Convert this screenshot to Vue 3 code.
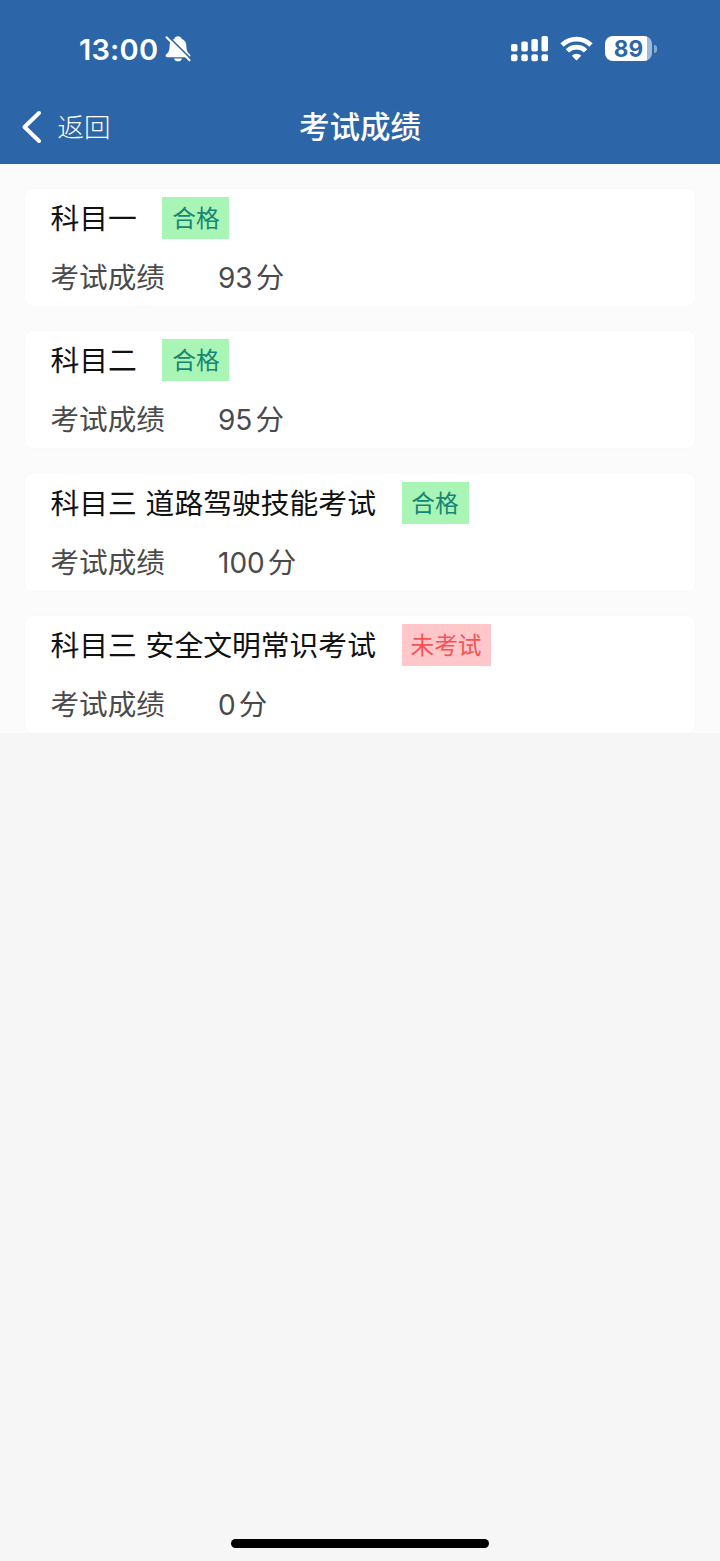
<template>
  <div class="page">
    <header class="header">
      <div class="status-bar">
        <div class="status-left">
          <span class="time">13:00</span>
          <svg class="bell" width="26" height="28" viewBox="0 0 26 28">
            <path d="M13 1.200c-1.900 0-3.200 1-3.600 2.500C6.200 4.900 4.700 7.500 4.600 11c-.1 5-1.100 6.300-3.500 8.600-1 1-.6 2.600.9 2.600h22c1.500 0 1.900-1.600.9-2.600-2.400-2.300-3.400-3.600-3.500-8.600-.1-3.500-1.600-6.100-4.800-7.300C16.200 2.200 14.900 1.200 13 1.200z" fill="#fff" />
            <path d="M9 23.400h8c-.4 1.900-1.900 2.900-4 2.900s-3.600-1-4-2.900z" fill="#fff" />
            <path d="M3.200 1.200L26 24" stroke="#2c66a9" stroke-width="1.600" />
            <path d="M1.500 2.300L24.500 25.300" stroke="#fff" stroke-width="2" stroke-linecap="round" />
          </svg>
        </div>
        <div class="status-right">
          <svg class="signal" width="38" height="26" viewBox="0 0 38 26" fill="#fff">
            <rect x="0" y="8" width="6.500" height="7.500" rx="1.800" />
            <rect x="10.300" y="5.500" width="6.500" height="10" rx="1.800" />
            <rect x="20.400" y="3" width="6.500" height="12.500" rx="1.800" />
            <rect x="30.500" y="0" width="6.500" height="15.500" rx="1.800" />
            <rect x="0" y="18.300" width="6.500" height="7" rx="2" />
            <rect x="10.300" y="18.300" width="6.500" height="7" rx="2" />
            <rect x="20.400" y="18.300" width="6.500" height="7" rx="2" />
            <rect x="30.500" y="18.300" width="6.500" height="7" rx="2" />
          </svg>
          <svg class="wifi" width="33" height="25" viewBox="0 0 33 25" fill="none" stroke="#fff" stroke-width="4.700">
            <path d="M2 9a20.800 20.800 0 0 1 29 0" />
            <path d="M7.400 14.900a13 13 0 0 1 18.200 0" />
            <path d="M16.500 24.400l-4.700-4.600a6.700 6.700 0 0 1 9.400 0z" fill="#fff" stroke="none" />
          </svg>
          <div class="battery">
            <div class="battery-body">89</div>
            <div class="battery-cap"></div>
          </div>
        </div>
      </div>
      <div class="nav-bar">
        <div class="back">
          <svg width="22" height="34" viewBox="0 0 22 34" fill="none" stroke="#fff" stroke-width="4" stroke-linecap="round" stroke-linejoin="round">
            <path d="M19 3L4.500 17L19 31" />
          </svg>
          <span class="back-text">返回</span>
        </div>
        <h1 class="title">考试成绩</h1>
        <div class="nav-side"></div>
      </div>
    </header>

    <main class="list">
      <div v-for="item in examList" :key="item.name" class="card">
        <div class="card-row">
          <span class="name">{{ item.name }}</span>
          <span class="tag" :class="item.passed ? 'tag-pass' : 'tag-none'">{{ item.passed ? '合格' : '未考试' }}</span>
        </div>
        <div class="score-row">
          <span class="label">考试成绩</span>
          <span class="score">{{ item.score }}</span>
          <span class="unit">分</span>
        </div>
      </div>
    </main>

    <footer class="footer">
      <div class="home-indicator"></div>
    </footer>
  </div>
</template>

<script setup>
import { ref } from 'vue';

const examList = ref([
  { name: '科目一', score: 93, passed: true },
  { name: '科目二', score: 95, passed: true },
  { name: '科目三 道路驾驶技能考试', score: 100, passed: true },
  { name: '科目三 安全文明常识考试', score: 0, passed: false },
]);
</script>

<style>
body {
  margin: 0;
  background: #f6f6f6;
}
</style>

<style scoped>
.page {
  display: flex;
  flex-direction: column;
  height: 1561px;
  background: #f6f6f6;
  font-family: Inter, "Noto Sans CJK SC", sans-serif;
  overflow: hidden;
}

.header {
  height: 163.5px;
  flex-shrink: 0;
  background: #2c66a9;
  color: #fff;
}

.status-bar {
  display: flex;
  justify-content: space-between;
  height: 90px;
  padding: 0 63px 0 79px;
  box-sizing: border-box;
}

.status-left {
  display: flex;
  align-items: flex-start;
  padding-top: 31px;
}

.time {
  width: 80px;
  font-size: 29px;
  line-height: 37px;
  font-weight: 600;
  letter-spacing: 0.2px;
  white-space: nowrap;
}

.bell {
  margin: 4px 0 0 6px;
}

.status-right {
  display: flex;
  align-items: flex-start;
  padding-top: 36px;
}

.signal {
  margin: 0 -1px 0 1px;
}

.wifi {
  margin-left: 12px;
}

.battery {
  display: flex;
  align-items: center;
  gap: 2px;
  margin-left: 12px;
}

.battery-body {
  width: 47px;
  height: 25px;
  border-radius: 8px;
  background: linear-gradient(to right, #fff 42px, #a0bbd9 42px);
  color: #2c66a9;
  font-size: 22.500px;
  line-height: 25px;
  font-weight: 700;
  text-align: center;
}

.battery-cap {
  width: 3px;
  height: 8px;
  border-radius: 0 3px 3px 0;
  background: #86a9d2;
}

.nav-bar {
  display: flex;
  align-items: center;
  height: 73px;
}

.back {
  display: flex;
  align-items: center;
  flex: 1;
}

.back svg {
  margin-left: 20px;
}

.back-text {
  margin-left: 15.500px;
  padding-top: 1px;
  font-size: 26.500px;
  line-height: 36px;
  font-weight: 300;
}

.title {
  margin: 0;
  font-size: 30.500px;
  line-height: 40px;
  font-weight: 500;
}

.nav-side {
  flex: 1;
}

.list {
  display: flex;
  flex-direction: column;
  gap: 25.400px;
  flex-shrink: 0;
  height: 569px;
  padding: 25.500px 25px 0;
  box-sizing: border-box;
  background: #fbfbfb;
}

.card {
  height: 117px;
  flex-shrink: 0;
  padding: 8px 25.500px 0;
  box-sizing: border-box;
  border-radius: 8px;
  background: #fff;
  box-shadow: 0 0 2px rgba(0, 0, 0, 0.04);
}

.card-row {
  display: flex;
  align-items: center;
  height: 42px;
}

.name {
  padding-top: 2px;
  font-size: 28.800px;
  line-height: 42px;
  color: #111;
  white-space: pre;
  word-spacing: 0.600px;
}

.tag {
  height: 42px;
  margin-left: 25.550px;
  font-size: 23.700px;
  line-height: 43px;
  text-align: center;
}

.tag-pass {
  width: 67px;
  background: #a9f5b6;
  color: #168574;
}

.tag-none {
  width: 89px;
  background: #ffc7ca;
  color: #f65355;
}

.score-row {
  display: flex;
  align-items: center;
  height: 42px;
  margin-top: 18px;
  font-size: 28.600px;
  line-height: 42px;
  color: #4a4a4a;
}

.label {
  width: 167.500px;
}

.score {
  font-size: 28px;
}

.unit {
  margin-left: 3px;
}

.footer {
  display: flex;
  flex: 1;
  align-items: flex-end;
  justify-content: center;
  padding-bottom: 13px;
}

.home-indicator {
  width: 258px;
  height: 9px;
  border-radius: 5px;
  background: #000;
}
</style>
